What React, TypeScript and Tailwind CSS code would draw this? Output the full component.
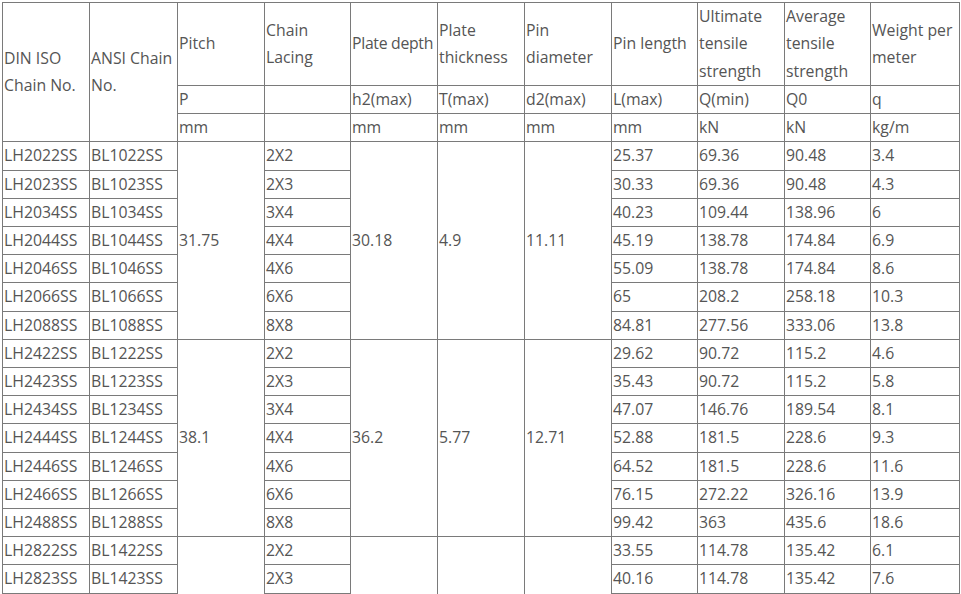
const widths = [87, 88, 87, 86, 87, 87, 87, 86, 87, 86, 89]

type Group = {
  pitch: string
  depth: string
  thick: string
  pin: string
  rows: string[][]
}

const groups: Group[] = [
  {
    pitch: "31.75",
    depth: "30.18",
    thick: "4.9",
    pin: "11.11",
    rows: [
      ["LH2022SS", "BL1022SS", "2X2", "25.37", "69.36", "90.48", "3.4"],
      ["LH2023SS", "BL1023SS", "2X3", "30.33", "69.36", "90.48", "4.3"],
      ["LH2034SS", "BL1034SS", "3X4", "40.23", "109.44", "138.96", "6"],
      ["LH2044SS", "BL1044SS", "4X4", "45.19", "138.78", "174.84", "6.9"],
      ["LH2046SS", "BL1046SS", "4X6", "55.09", "138.78", "174.84", "8.6"],
      ["LH2066SS", "BL1066SS", "6X6", "65", "208.2", "258.18", "10.3"],
      ["LH2088SS", "BL1088SS", "8X8", "84.81", "277.56", "333.06", "13.8"],
    ],
  },
  {
    pitch: "38.1",
    depth: "36.2",
    thick: "5.77",
    pin: "12.71",
    rows: [
      ["LH2422SS", "BL1222SS", "2X2", "29.62", "90.72", "115.2", "4.6"],
      ["LH2423SS", "BL1223SS", "2X3", "35.43", "90.72", "115.2", "5.8"],
      ["LH2434SS", "BL1234SS", "3X4", "47.07", "146.76", "189.54", "8.1"],
      ["LH2444SS", "BL1244SS", "4X4", "52.88", "181.5", "228.6", "9.3"],
      ["LH2446SS", "BL1246SS", "4X6", "64.52", "181.5", "228.6", "11.6"],
      ["LH2466SS", "BL1266SS", "6X6", "76.15", "272.22", "326.16", "13.9"],
      ["LH2488SS", "BL1288SS", "8X8", "99.42", "363", "435.6", "18.6"],
    ],
  },
  {
    pitch: "44.45",
    depth: "42.24",
    thick: "7.1",
    pin: "14.29",
    rows: [
      ["LH2822SS", "BL1422SS", "2X2", "33.55", "114.78", "135.42", "6.1"],
      ["LH2823SS", "BL1423SS", "2X3", "40.16", "114.78", "135.42", "7.6"],
      ["LH2834SS", "BL1434SS", "3X4", "53.73", "181.44", "222.3", "10.6"],
      ["LH2844SS", "BL1444SS", "4X4", "60.24", "229.5", "281.42", "12.1"],
      ["LH2846SS", "BL1446SS", "4X6", "73.8", "229.5", "281.42", "15.2"],
      ["LH2866SS", "BL1466SS", "6X6", "87.37", "344.16", "403.28", "18.2"],
      ["LH2888SS", "BL1488SS", "8X8", "114.49", "458.88", "537.66", "24.3"],
    ],
  },
]

const cell = "border border-[#7a7a7a] px-[1px] py-0 align-middle text-left font-normal"

export default function App() {
  return (
    <div className="bg-white pl-[2px] pt-[2px] text-[15.8px] leading-[27.2px] text-[#555]" style={{ fontFamily: "'Open Sans', sans-serif" }}>
      <table className="table-fixed border-collapse w-[957px]">
        <colgroup>
          {widths.map((w, i) => (
            <col key={i} style={{ width: w }} />
          ))}
        </colgroup>
        <thead>
          <tr className="h-[83px]">
            <th rowSpan={3} className={cell}>DIN ISO Chain No.</th>
            <th rowSpan={3} className={cell}>ANSI Chain No.</th>
            <th className={cell}>Pitch</th>
            <th className={cell}>Chain Lacing</th>
            <th className={cell + " whitespace-nowrap tracking-[-0.3px]"}>Plate depth</th>
            <th className={cell}>Plate thickness</th>
            <th className={cell}>Pin diameter</th>
            <th className={cell}>Pin length</th>
            <th className={cell}>Ultimate tensile strength</th>
            <th className={cell}>Average tensile strength</th>
            <th className={cell}>Weight per meter</th>
          </tr>
          <tr>
            <td className={cell}>P</td>
            <td className={cell}></td>
            <td className={cell}>h2(max)</td>
            <td className={cell}>T(max)</td>
            <td className={cell}>d2(max)</td>
            <td className={cell}>L(max)</td>
            <td className={cell}>Q(min)</td>
            <td className={cell}>Q0</td>
            <td className={cell}>q</td>
          </tr>
          <tr>
            <td className={cell}>mm</td>
            <td className={cell}></td>
            <td className={cell}>mm</td>
            <td className={cell}>mm</td>
            <td className={cell}>mm</td>
            <td className={cell}>mm</td>
            <td className={cell}>kN</td>
            <td className={cell}>kN</td>
            <td className={cell}>kg/m</td>
          </tr>
        </thead>
        <tbody>
          {groups.map((g) =>
            g.rows.map((r, i) => (
              <tr key={r[0]}>
                <td className={cell}>{r[0]}</td>
                <td className={cell}>{r[1]}</td>
                {i === 0 && <td rowSpan={g.rows.length} className={cell}>{g.pitch}</td>}
                <td className={cell}>{r[2]}</td>
                {i === 0 && <td rowSpan={g.rows.length} className={cell}>{g.depth}</td>}
                {i === 0 && <td rowSpan={g.rows.length} className={cell}>{g.thick}</td>}
                {i === 0 && <td rowSpan={g.rows.length} className={cell}>{g.pin}</td>}
                <td className={cell}>{r[3]}</td>
                <td className={cell}>{r[4]}</td>
                <td className={cell}>{r[5]}</td>
                <td className={cell}>{r[6]}</td>
              </tr>
            ))
          )}
        </tbody>
      </table>
    </div>
  )
}
